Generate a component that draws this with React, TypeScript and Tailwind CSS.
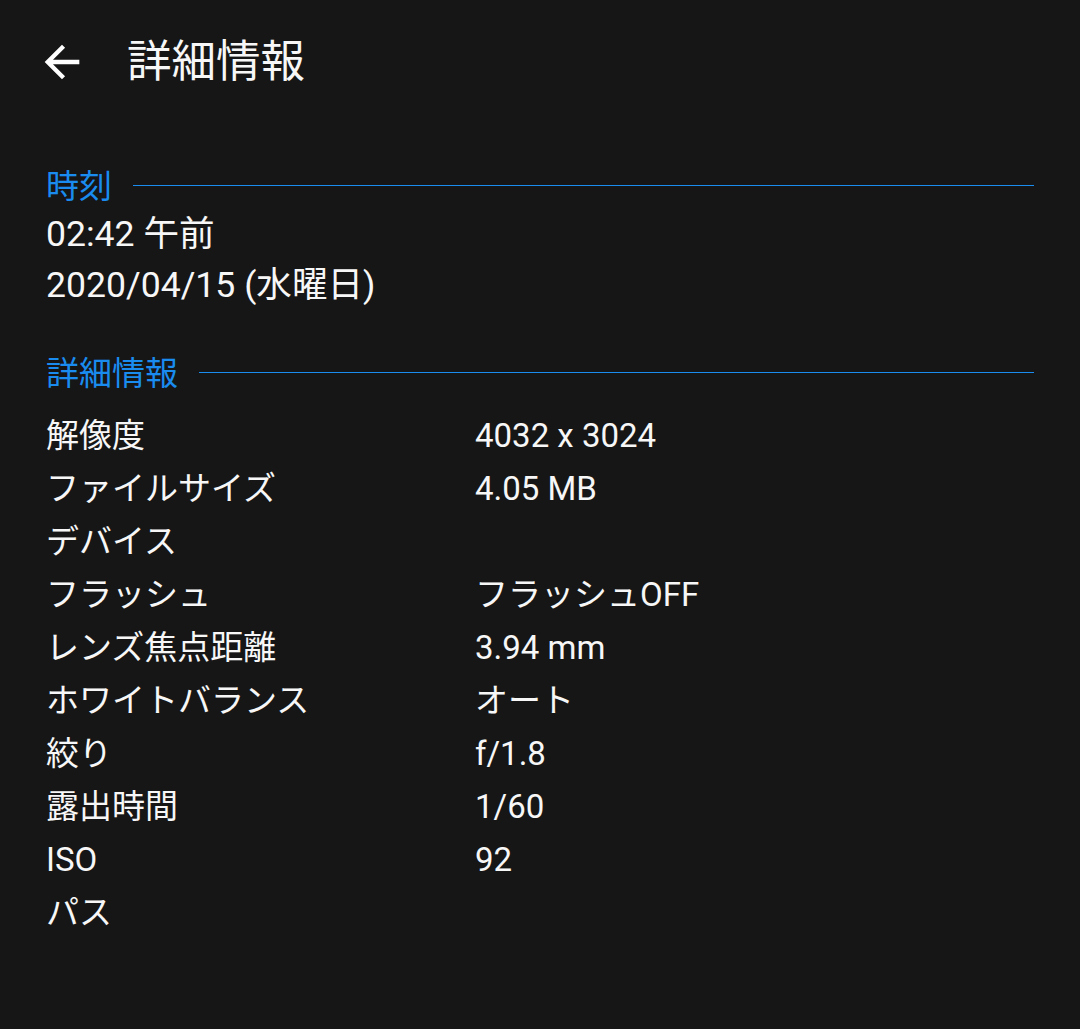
import React from "react";

const font = { fontFamily: 'Roboto, "Noto Sans CJK JP", sans-serif' };

const rows: [string, string][] = [
  ["解像度", "4032 x 3024"],
  ["ファイルサイズ", "4.05 MB"],
  ["デバイス", ""],
  ["フラッシュ", "フラッシュOFF"],
  ["レンズ焦点距離", "3.94 mm"],
  ["ホワイトバランス", "オート"],
  ["絞り", "f/1.8"],
  ["露出時間", "1/60"],
  ["ISO", "92"],
  ["パス", ""],
];

function SectionTitle({ text }: { text: string }) {
  return (
    <div className="flex items-center h-[44px] gap-[21px]">
      <span className="text-[33px] leading-[44px] text-[#1a8cf0]">{text}</span>
      <div className="flex-1 h-px bg-[#1a8cf0] mt-[-3px]" />
    </div>
  );
}

export default function App() {
  return (
    <div className="w-[1080px] h-[1029px] bg-[#161616] text-[#f7f7f7] overflow-hidden" style={font}>
      <div className="flex items-center h-[124px]">
        <svg viewBox="0 0 24 24" className="w-[52px] h-[52px] ml-[36px]" fill="#ffffff">
          <path d="M20 11H7.83l5.59-5.59L12 4l-8 8 8 8 1.41-1.41L7.83 13H20v-2z" />
        </svg>
        <span className="ml-[39px] text-[44.5px] leading-[60px]">詳細情報</span>
      </div>
      <div className="px-[46px]">
        <div className="mt-[41px]">
          <SectionTitle text="時刻" />
          <div className="text-[35.6px] leading-[51px]">02:42 午前</div>
          <div className="text-[35.6px] leading-[51px]">2020/04/15 (水曜日)</div>
        </div>
        <div className="mt-[41px]">
          <SectionTitle text="詳細情報" />
          <div className="mt-[13px] flex flex-col">
            {rows.map(([k, v]) => (
              <div key={k} className="flex h-[53px] items-center text-[33px] leading-[53px]">
                <span className="w-[429px]">{k}</span>
                <span>{v}</span>
              </div>
            ))}
          </div>
        </div>
      </div>
    </div>
  );
}
